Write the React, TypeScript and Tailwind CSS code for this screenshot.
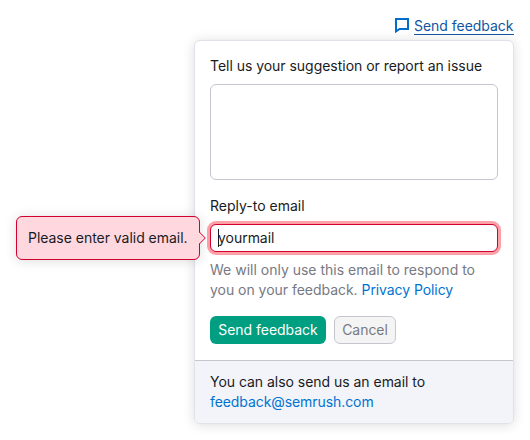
import React, { useState } from 'react';

function FeedbackIcon() {
  return (
    <svg width="16" height="16" viewBox="0 0 16 16" fill="none" className="shrink-0">
      <path d="M2 2H14V12H5.6L2 14.4Z" stroke="#006dca" strokeWidth="2" />
    </svg>
  );
}

function ErrorTooltip({ children }: { children: React.ReactNode }) {
  return (
    <div
      role="alert"
      className="absolute -left-[195px] -top-[9px] flex h-11 w-[184px] items-center whitespace-nowrap rounded-md border border-[#d1002f] bg-[#ffd7df] pl-[11px] shadow-[0_1px_12px_rgba(25,27,35,0.15)]"
    >
      {children}
      <svg width="8" height="14" viewBox="0 0 8 14" className="absolute -right-[8px] top-[14px]">
        <path d="M0 1L6.2 7L0 13Z" fill="#ffd7df" />
        <path d="M0.3 1L6.3 7L0.3 13" fill="none" stroke="#d1002f" />
      </svg>
    </div>
  );
}

export default function App() {
  const [message, setMessage] = useState('');
  return (
    <main className="flex h-[440px] w-[530px] flex-col items-end overflow-hidden bg-white pr-4 pt-[15px] font-['Inter',sans-serif] text-sm leading-5 tracking-[-0.03px] text-[#191b23]">
      <a href="#" className="flex h-5 items-center gap-1 text-[#12559f]">
        <FeedbackIcon />
        <span className="h-[19px] w-[100px] whitespace-nowrap border-b border-[#12559f] leading-5">Send feedback</span>
      </a>
      <section className="mt-[5px] flex h-96 w-80 flex-col rounded-md border border-[#e0e1e9] bg-white shadow-[0_1px_12px_rgba(25,27,35,0.15)]">
        <form className="flex flex-col px-[15px] pb-4 pt-[15px]">
          <label htmlFor="message">Tell us your suggestion or report an issue</label>
          <textarea
            id="message"
            value={message}
            onChange={(e) => setMessage(e.target.value)}
            className="mt-2 h-24 resize-none rounded-md border border-[#c4c7cf] bg-white outline-none"
          />
          <span className="mt-4 tracking-normal">Reply-to email</span>
          <div className="relative mt-2 flex h-7 items-center rounded-md border border-[#d1002f] bg-white pl-[7px] shadow-[0_0_0_3px_#ff9fa6]">
            <span className="h-[18px] w-px bg-[#191b23]" />
            <span className="-ml-px">yourmail</span>
            <ErrorTooltip>Please enter valid email.</ErrorTooltip>
          </div>
          <p className="mt-2 text-[#777983]">
            <span className="tracking-normal">We will only use this email to respond to</span>
            <br />
            you on your feedback.{' '}
            <a href="#" className="tracking-[-0.08px] text-[#0073d1]">Privacy Policy</a>
          </p>
          <div className="mt-4 flex gap-2">
            <button type="button" className="h-7 w-[116px] whitespace-nowrap rounded-md bg-[#009f81] text-white">Send feedback</button>
            <button type="button" className="h-7 w-[62px] rounded-md border border-[#c4c7cf] bg-[#f4f4f5] text-[#777983]">Cancel</button>
          </div>
        </form>
        <footer className="flex-1 rounded-b-[5px] border-t border-[#c4c7cf] bg-[#f3f4f9] px-[15px] pt-[11px]">
          <p>You can also send us an email to</p>
          <a href="#" className="tracking-[-0.08px] text-[#0073d1]">feedback@semrush.com</a>
        </footer>
      </section>
    </main>
  );
}
